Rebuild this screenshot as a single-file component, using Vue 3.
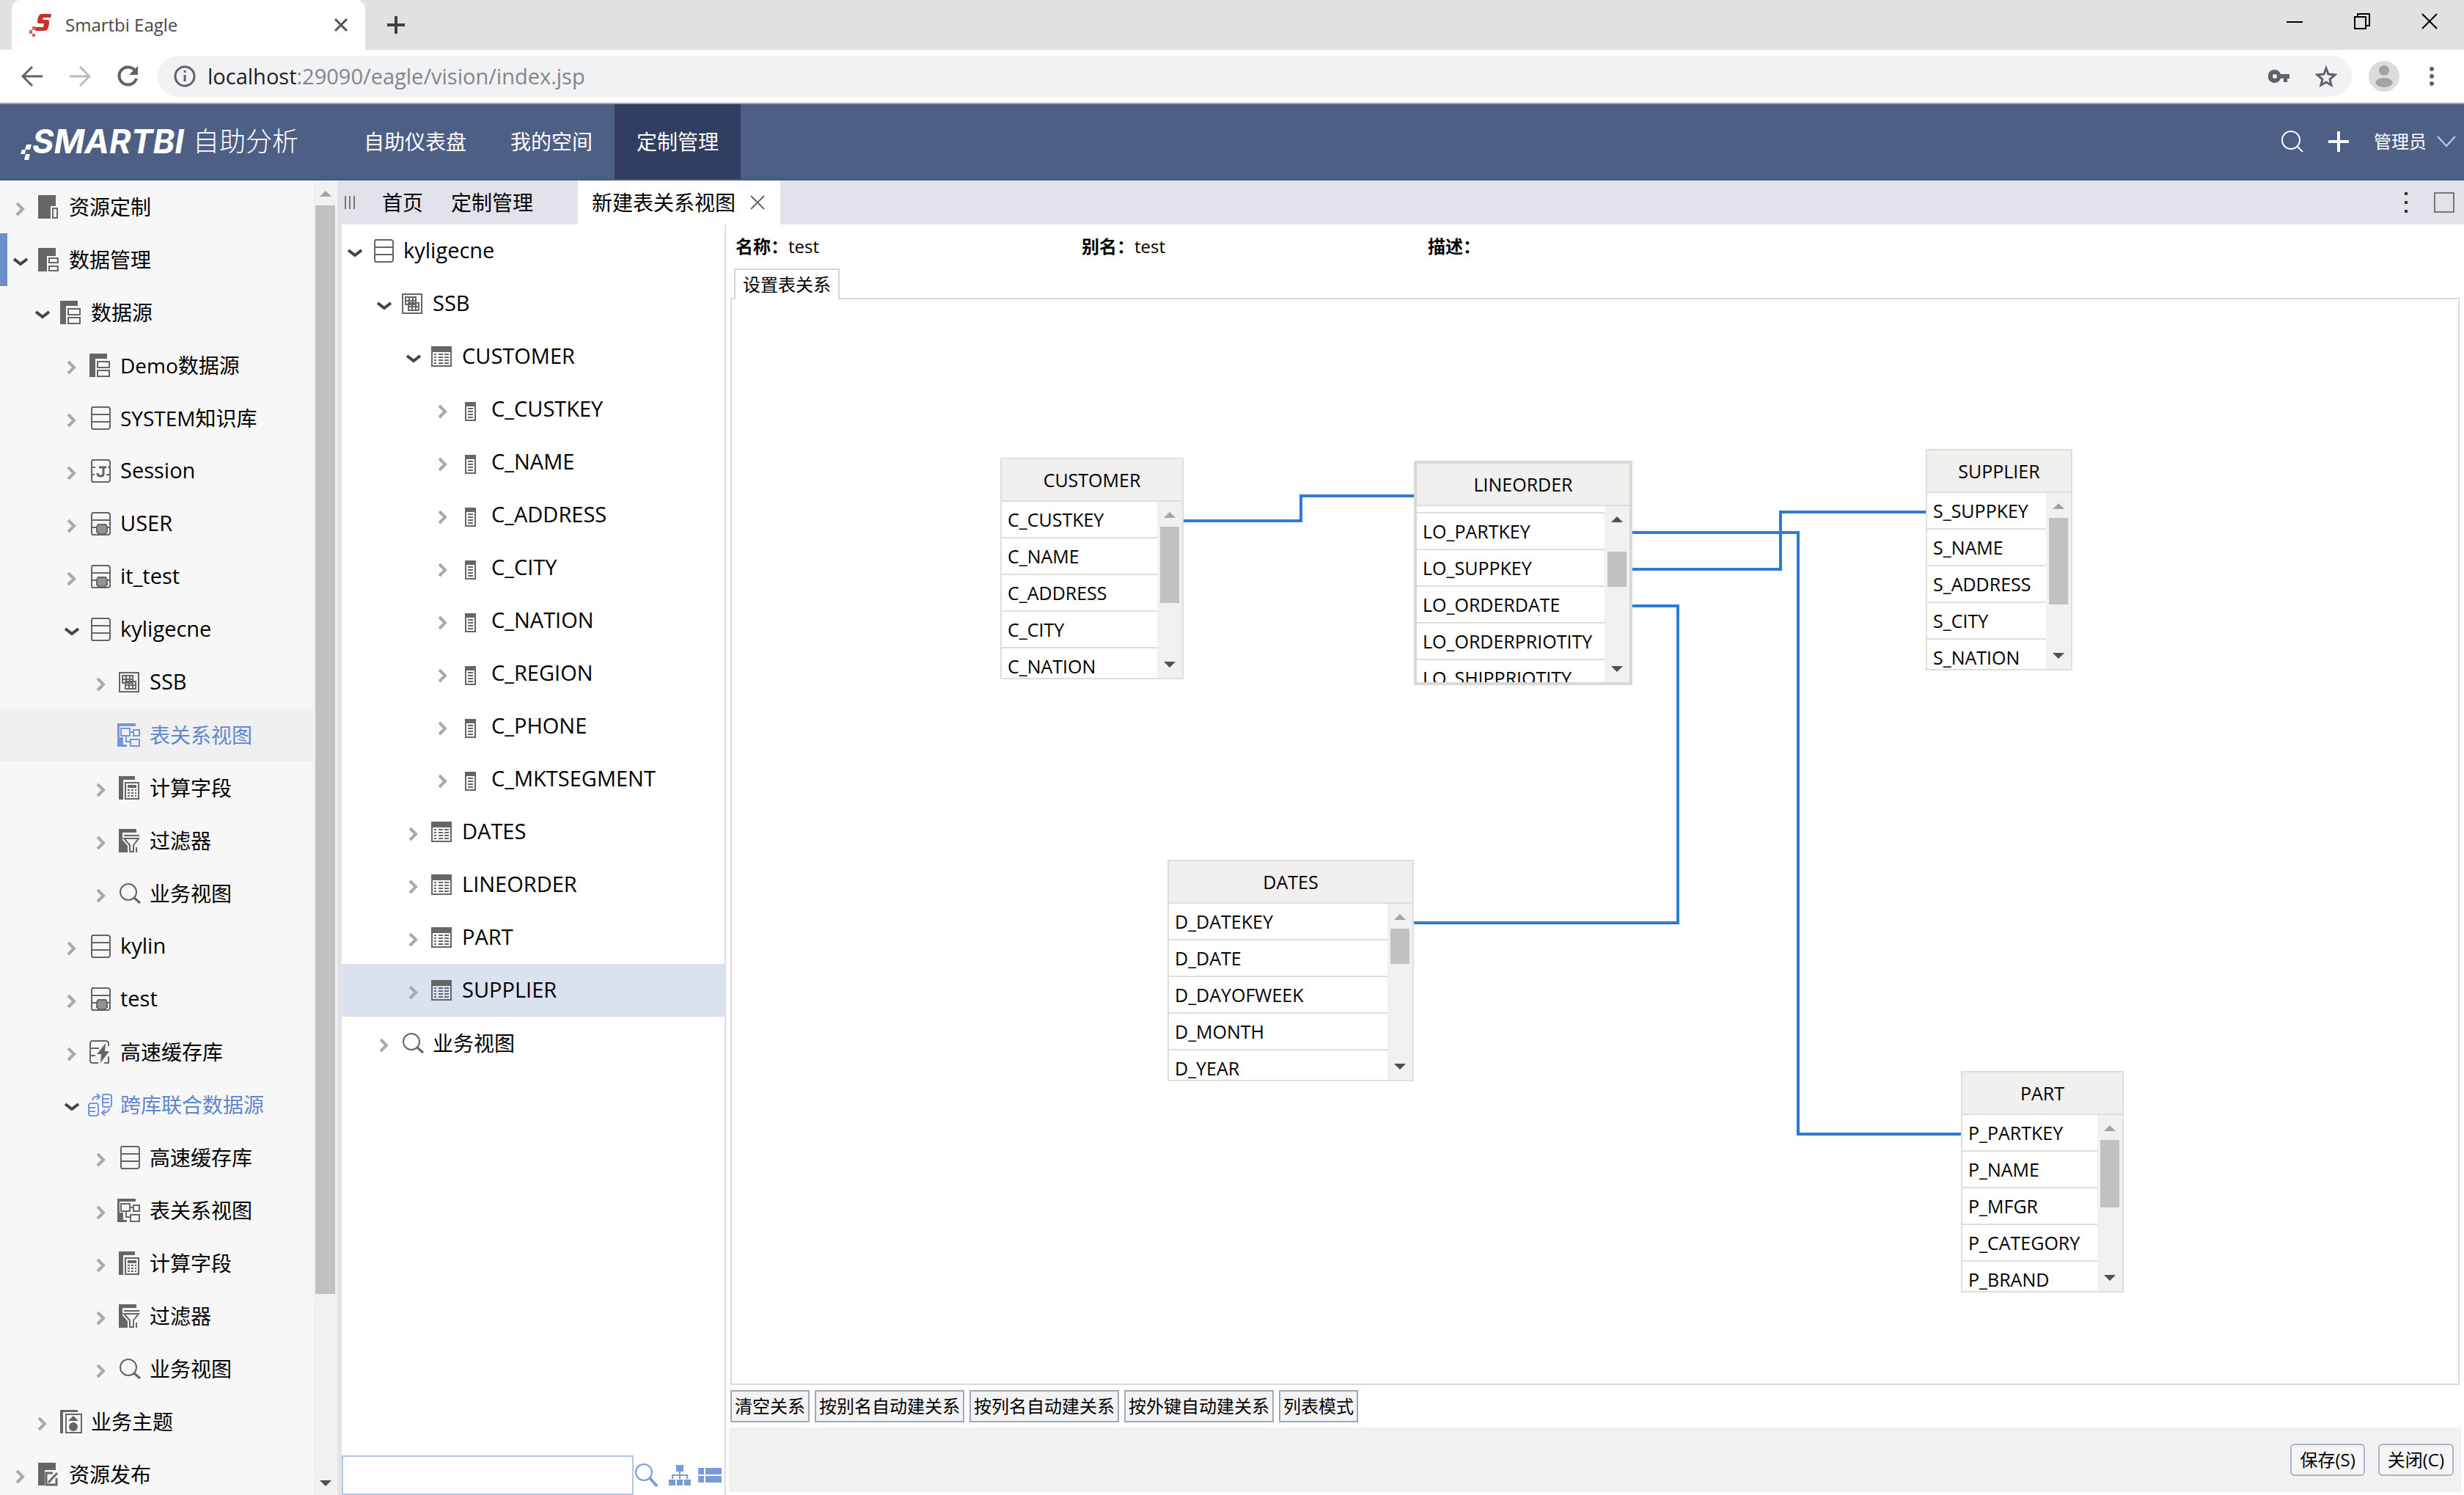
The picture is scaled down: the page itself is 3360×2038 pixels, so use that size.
<script setup>
import { ref } from 'vue'

const navItems = ['自助仪表盘', '我的空间', '定制管理']

const resources = [
  { level: 1, icon: 'folder-doc', label: '资源定制' },
  { level: 1, icon: 'folder-data', label: '数据管理', open: true, marked: true },
  { level: 2, icon: 'folder-source', label: '数据源', open: true },
  { level: 3, icon: 'folder-source', label: 'Demo数据源' },
  { level: 3, icon: 'db', label: 'SYSTEM知识库' },
  { level: 3, icon: 'session', label: 'Session' },
  { level: 3, icon: 'db-user', label: 'USER' },
  { level: 3, icon: 'db-user', label: 'it_test' },
  { level: 3, icon: 'db', label: 'kyligecne', open: true },
  { level: 4, icon: 'schema', label: 'SSB' },
  { level: 4, icon: 'relation', label: '表关系视图', leaf: true, current: true, blue: true },
  { level: 4, icon: 'calc', label: '计算字段' },
  { level: 4, icon: 'filter', label: '过滤器' },
  { level: 4, icon: 'lens', label: '业务视图' },
  { level: 3, icon: 'db', label: 'kylin' },
  { level: 3, icon: 'db-user', label: 'test' },
  { level: 3, icon: 'db-fast', label: '高速缓存库' },
  { level: 3, icon: 'db-cross', label: '跨库联合数据源', open: true, blue: true },
  { level: 4, icon: 'db', label: '高速缓存库' },
  { level: 4, icon: 'relation', label: '表关系视图' },
  { level: 4, icon: 'calc', label: '计算字段' },
  { level: 4, icon: 'filter', label: '过滤器' },
  { level: 4, icon: 'lens', label: '业务视图' },
  { level: 2, icon: 'theme', label: '业务主题' },
  { level: 1, icon: 'publish', label: '资源发布' },
]

const columns = ['C_CUSTKEY', 'C_NAME', 'C_ADDRESS', 'C_CITY', 'C_NATION', 'C_REGION', 'C_PHONE', 'C_MKTSEGMENT']
const catalog = [
  { level: 1, icon: 'db', label: 'kyligecne', open: true },
  { level: 2, icon: 'schema', label: 'SSB', open: true },
  { level: 3, icon: 'table', label: 'CUSTOMER', open: true },
  ...columns.map((label) => ({ level: 4, icon: 'column', label })),
  { level: 3, icon: 'table', label: 'DATES' },
  { level: 3, icon: 'table', label: 'LINEORDER' },
  { level: 3, icon: 'table', label: 'PART' },
  { level: 3, icon: 'table', label: 'SUPPLIER', selected: true },
  { level: 2, icon: 'lens', label: '业务视图' },
]

const tables = [
  { name: 'CUSTOMER', x: 366, y: 216, w: 250, bar: [34, 104], fields: ['C_CUSTKEY', 'C_NAME', 'C_ADDRESS', 'C_CITY', 'C_NATION'] },
  { name: 'LINEORDER', x: 930, y: 220, w: 298, bar: [62, 48], focus: true, fields: ['LO_PARTKEY', 'LO_SUPPKEY', 'LO_ORDERDATE', 'LO_ORDERPRIOTITY', 'LO_SHIPPRIOTITY'] },
  { name: 'SUPPLIER', x: 1628, y: 204, w: 200, bar: [34, 118], fields: ['S_SUPPKEY', 'S_NAME', 'S_ADDRESS', 'S_CITY', 'S_NATION'] },
  { name: 'DATES', x: 594, y: 764, w: 336, bar: [34, 48], fields: ['D_DATEKEY', 'D_DATE', 'D_DAYOFWEEK', 'D_MONTH', 'D_YEAR'] },
  { name: 'PART', x: 1676, y: 1052, w: 222, bar: [34, 92], fields: ['P_PARTKEY', 'P_NAME', 'P_MFGR', 'P_CATEGORY', 'P_BRAND'] },
]

const links = [
  'M616 302H776V268H930',
  'M1228 318H1454V1138H1676',
  'M1228 368H1430V290H1628',
  'M1228 418H1290V850H930',
]

const actions = ['清空关系', '按别名自动建关系', '按列名自动建关系', '按外键自动建关系', '列表模式']
const keyword = ref('')
const isLatin = (text) => /^[\w ]+$/.test(text)
</script>

<template>
  <div class="window">
    <svg class="sprite" aria-hidden="true">
      <symbol id="chev-right" viewBox="0 0 20 32"><path d="M5 11l8 8-8 8" fill="none" stroke="#a9a9a9" stroke-width="4" /></symbol>
      <symbol id="chev-down" viewBox="0 0 20 32"><path d="M1 15l9 7 9-7" fill="none" stroke="#444" stroke-width="4" /></symbol>
      <symbol id="folder-doc" viewBox="0 0 32 32">
        <path d="M0 0h24v15h-7v17H0z" fill="currentColor" /><path d="M20 18h6v13h-6z" fill="none" stroke="currentColor" stroke-width="2" />
      </symbol>
      <symbol id="folder-data" viewBox="0 0 32 32">
        <path d="M0 0h24v11H12v21H0z" fill="currentColor" /><path d="M15 14h12v6H15zM15 25h12v6H15z" fill="none" stroke="currentColor" stroke-width="2" />
      </symbol>
      <symbol id="folder-source" viewBox="0 0 32 32">
        <path d="M0 0h24v7H8v25H0z" fill="currentColor" /><path d="M11 11h16v8H11zM11 23h16v8H11z" fill="none" stroke="currentColor" stroke-width="2" />
      </symbol>
      <symbol id="db" viewBox="0 0 32 32">
        <path d="M4 1h22l2 2v26l-2 2H4l-1-2V3zM3 11h25M3 21h25" fill="none" stroke="currentColor" stroke-width="2" />
      </symbol>
      <symbol id="db-user" viewBox="0 0 32 32">
        <path d="M4 1h22l2 2v26l-2 2H4l-1-2V3zM3 11h25M3 21h7M24 21h4" fill="none" stroke="currentColor" stroke-width="2" />
        <path d="M12 17h10l2 3v7l-3 3h-8l-3-3v-7z" fill="#929292" stroke="currentColor" stroke-width="2" />
      </symbol>
      <symbol id="session" viewBox="0 0 32 32">
        <path d="M4 1h22l2 2v26l-2 2H4l-1-2V3zM3 11h5M3 21h4M25 11h3M23 21h5" fill="none" stroke="currentColor" stroke-width="2" />
        <path d="M13 11h10M19 11v9q0 3-4 3-4 0-4-4" fill="none" stroke="currentColor" stroke-width="3" />
      </symbol>
      <symbol id="db-fast" viewBox="0 0 32 32">
        <path d="M12 31H3l-2-2V3l2-2h20l3 2v5M1 11h12M1 21h7M20 31h6v-9" fill="none" stroke="currentColor" stroke-width="2" />
        <path d="M22 4L10 19h6l-1 12 12-16h-6z" fill="currentColor" />
      </symbol>
      <symbol id="db-cross" viewBox="0 0 32 32" overflow="visible">
        <path d="M19 2h9l2 2v13l-2 2h-9l-1-2V4zM18 8h9M18 13h9M1 14h9l2 2v13l-2 2H1l-2-2V16zM-1 20h9M-1 25h9M4 10q1-6 9-5M10 1l4 4-4 4M27 21q-1 6-9 6M21 23l-4 4 4 4" fill="none" stroke="currentColor" stroke-width="2" />
      </symbol>
      <symbol id="schema" viewBox="0 0 32 32">
        <path d="M1 3h26v26H1z" fill="none" stroke="currentColor" stroke-width="2" />
        <path d="M5 7h14v10H5zM5 12h14M10 7v10M15 7v10M9 15h14v10H9zM9 20h14M14 15v10M19 15v10" fill="none" stroke="currentColor" stroke-width="2" />
      </symbol>
      <symbol id="relation" viewBox="0 0 32 32" overflow="visible">
        <path d="M-2 0h25v4H1v15h5v10h5v3H-2z" fill="currentColor" />
        <path d="M3 7h12v10H3zM20 9h8v8h-8zM16 22h12v9H16zM15 12h5M10 17v8h6" fill="none" stroke="currentColor" stroke-width="2" />
      </symbol>
      <symbol id="calc" viewBox="0 0 32 32">
        <path d="M0 0h22v5H6v27H0z" fill="currentColor" /><path d="M9 9h18v22H9z" fill="none" stroke="currentColor" stroke-width="2" />
        <path d="M12 12h12v4H12z" fill="currentColor" /><path d="M12 19h12M12 23h12M12 27h12" stroke="currentColor" stroke-width="2" stroke-dasharray="3 2" />
      </symbol>
      <symbol id="filter" viewBox="0 0 32 32">
        <path d="M0 0h24v5H5v10l7 8v9H0z" fill="currentColor" />
        <path d="M7 9h21M7 13h20l-7 9v9h-5v-9zM24 25v7" fill="none" stroke="currentColor" stroke-width="2" />
      </symbol>
      <symbol id="lens" viewBox="0 0 32 32">
        <circle cx="13" cy="14" r="11" fill="none" stroke="currentColor" stroke-width="2" /><path d="M21 22l8 7" stroke="currentColor" stroke-width="3" />
      </symbol>
      <symbol id="theme" viewBox="0 0 32 32">
        <path d="M0 0h24v3H4v29H0z" fill="currentColor" /><path d="M8 6h21v25H8z" fill="none" stroke="currentColor" stroke-width="2" />
        <path d="M18 8l7 7H11z" fill="currentColor" /><circle cx="18" cy="23" r="6" fill="currentColor" />
      </symbol>
      <symbol id="publish" viewBox="0 0 32 32">
        <path d="M0 0h24v10H9v21H0z" fill="currentColor" /><path d="M20 14H11v16h14v-9M14 27L26 14" fill="none" stroke="currentColor" stroke-width="3" />
      </symbol>
      <symbol id="table" viewBox="0 0 32 32">
        <path d="M0 2h28v8H0z" fill="currentColor" /><path d="M1 9h26v20H1z" fill="none" stroke="currentColor" stroke-width="2" />
        <path d="M4 13h3M10 13h6M18 13h6M4 17h3M10 17h6M18 17h6M4 21h3M10 21h6M18 21h6M4 25h3M10 25h6M18 25h6" stroke="currentColor" stroke-width="2" />
      </symbol>
      <symbol id="column" viewBox="0 0 32 32">
        <path d="M6 6h15v6H6z" fill="currentColor" /><path d="M7 11h13v20H7z" fill="none" stroke="currentColor" stroke-width="2" />
        <path d="M10 15h7M10 19h7M10 23h7M10 27h7" stroke="currentColor" stroke-width="2" />
      </symbol>
      <symbol id="tri-up" viewBox="0 0 16 8"><path d="M8 0l8 8H0z" fill="currentColor" /></symbol>
      <symbol id="tri-down" viewBox="0 0 16 8"><path d="M0 0h16L8 8z" fill="currentColor" /></symbol>
    </svg>

    <div class="tab-strip">
      <div class="browser-tab">
        <svg class="favicon" viewBox="0 0 32 32">
          <path d="M30 1H18q-5 0-6 5l-1 4q-1 4 3 4h6l-1 5H9l-1 5h12q5 0 6-5l1-5q1-5-3-5h-6l1-3h10z" fill="#c9302c" />
          <path d="M4 18h5v5H4zM0 23h4v5H0zM4 28h4v4H4z" fill="#d9645f" />
        </svg>
        <span class="browser-title">Smartbi Eagle</span>
        <button class="plain" aria-label="关闭标签"><svg width="18" height="18" viewBox="0 0 18 18"><path d="M1 1l16 16M17 1L1 17" stroke="#50545a" stroke-width="3" /></svg></button>
      </div>
      <button class="plain new-tab" aria-label="新标签"><svg width="24" height="24" viewBox="0 0 24 24"><path d="M12 0v24M0 12h24" stroke="#3c4043" stroke-width="4" /></svg></button>
      <div class="window-controls">
        <button class="plain" aria-label="最小化"><svg width="22" height="22" viewBox="0 0 22 22"><path d="M0 12h22" stroke="#000" stroke-width="2" /></svg></button>
        <button class="plain" aria-label="还原"><svg width="22" height="22" viewBox="0 0 22 22"><path d="M1 5h15v16H1zM5 5V1h16v16h-4" fill="none" stroke="#000" stroke-width="2" /></svg></button>
        <button class="plain" aria-label="关闭"><svg width="22" height="22" viewBox="0 0 22 22"><path d="M1 1l20 20M21 1L1 21" stroke="#000" stroke-width="2" /></svg></button>
      </div>
    </div>

    <div class="toolbar">
      <button class="plain" aria-label="后退"><svg width="30" height="30" viewBox="0 0 30 30"><path d="M29 15H3M15 2L2 15l13 13" fill="none" stroke="#5f6368" stroke-width="3" /></svg></button>
      <button class="plain" aria-label="前进"><svg width="30" height="30" viewBox="0 0 30 30"><path d="M1 15h26M15 2l13 13-13 13" fill="none" stroke="#babcbe" stroke-width="3" /></svg></button>
      <button class="plain" aria-label="刷新"><svg width="30" height="30" viewBox="0 0 30 30"><path d="M25 7A12 12 0 1 0 27 18" fill="none" stroke="#5f6368" stroke-width="4" /><path d="M29 1v12H17z" fill="#5f6368" /></svg></button>
      <div class="omnibox">
        <svg width="30" height="30" viewBox="0 0 30 30"><circle cx="15" cy="15" r="13" fill="none" stroke="#5f6368" stroke-width="3" /><path d="M15 13v9M15 7v3" stroke="#5f6368" stroke-width="3" /></svg>
        <div class="url"><span class="host">localhost</span>:29090/eagle/vision/index.jsp</div>
        <svg width="30" height="20" viewBox="0 0 30 20"><path d="M9 1a9 9 0 1 0 8 12h4v5h5v-5h3V7H17A9 9 0 0 0 9 1zm0 6a3 3 0 1 1 0 6 3 3 0 0 1 0-6z" fill="#5f6368" fill-rule="evenodd" /></svg>
        <svg width="30" height="30" viewBox="0 0 30 30"><path d="M15 4l3 8 9 1-7 6 2 8-7-4-7 4 2-8-7-6 9-1z" fill="none" stroke="#5f6368" stroke-width="3" /></svg>
      </div>
      <svg width="42" height="42" viewBox="0 0 42 42"><circle cx="21" cy="21" r="21" fill="#dcdcdc" /><circle cx="21" cy="13" r="7" fill="#a3a3a3" /><path d="M9 30q2-7 12-7t12 7q-4 6-12 6T9 30z" fill="#a3a3a3" /></svg>
      <button class="plain" aria-label="菜单"><svg width="8" height="30" viewBox="0 0 8 30"><g fill="#5f6368"><circle cx="4" cy="5" r="3" /><circle cx="4" cy="15" r="3" /><circle cx="4" cy="25" r="3" /></g></svg></button>
    </div>

    <header class="app-header">
      <div class="logo">
        <svg width="20" height="32" viewBox="0 0 20 32"><path d="M8 10h7l-2 7H6zM2 17h5l-1 6H0zM7 23h6l-2 8H5z" fill="#fff" /></svg>
        <span class="brand">SMARTBI</span>
        <span class="product">自助分析</span>
      </div>
      <nav>
        <a v-for="item in navItems" :key="item" href="#" :class="{ active: item === '定制管理' }">{{ item }}</a>
      </nav>
      <div class="header-tools">
        <button class="plain" aria-label="搜索"><svg width="30" height="30" viewBox="0 0 30 30"><circle cx="13" cy="13" r="12" fill="none" stroke="#fff" stroke-width="2" /><path d="M22 22l7 7" stroke="#fff" stroke-width="2" /></svg></button>
        <button class="plain" aria-label="新建"><svg width="28" height="28" viewBox="0 0 28 28"><path d="M14 0v28M0 14h28" stroke="#fff" stroke-width="4" /></svg></button>
        <button class="plain user">管理员<svg width="26" height="16" viewBox="0 0 26 16"><path d="M1 1l12 13L25 1" fill="none" stroke="#c5cbdb" stroke-width="2" /></svg></button>
      </div>
    </header>

    <div class="body">
      <aside class="sidebar">
        <ul class="tree">
          <li v-for="(row, i) in resources" :key="i" :class="['row', 'level-' + row.level, { marked: row.marked, current: row.current, blue: row.blue }]">
            <button class="plain toggle" :aria-label="row.label"><svg v-if="!row.leaf" width="20" height="32"><use :href="row.open ? '#chev-down' : '#chev-right'" /></svg></button>
            <svg class="icon" width="32" height="32"><use :href="'#' + row.icon" /></svg>
            <span :class="['label', { latin: isLatin(row.label) }]">{{ row.label }}</span>
          </li>
        </ul>
        <div class="scrollbar">
          <svg class="dim" width="16" height="8"><use href="#tri-up" /></svg>
          <div class="track"><div class="thumb" :style="{ height: '86%' }"></div></div>
          <svg width="16" height="8"><use href="#tri-down" /></svg>
        </div>
      </aside>

      <main class="workspace">
        <div class="page-tabs">
          <svg class="grip" width="16" height="18" viewBox="0 0 16 18"><path d="M2 0v18M8 0v18M14 0v18" stroke="#777" stroke-width="2" /></svg>
          <a href="#" class="page-tab">首页</a>
          <a href="#" class="page-tab">定制管理</a>
          <div class="page-tab active">新建表关系视图
            <button class="plain" aria-label="关闭页面"><svg width="20" height="20" viewBox="0 0 20 20"><path d="M1 1l18 18M19 1L1 19" stroke="#666" stroke-width="2" /></svg></button>
          </div>
          <div class="page-tools">
            <button class="plain" aria-label="更多"><svg width="4" height="28" viewBox="0 0 4 28"><path d="M0 0h4v4H0zM0 12h4v4H0zM0 24h4v4H0z" fill="#333" /></svg></button>
            <button class="plain" aria-label="最大化"><svg width="28" height="28" viewBox="0 0 28 28"><path d="M1 1h26v26H1z" fill="none" stroke="#777" stroke-width="2" /></svg></button>
          </div>
        </div>

        <div class="panes">
          <section class="catalog">
            <ul class="tree">
              <li v-for="row in catalog" :key="row.label" :class="['row', 'level-' + row.level, { selected: row.selected }]">
                <button class="plain toggle" :aria-label="row.label"><svg width="20" height="32"><use :href="row.open ? '#chev-down' : '#chev-right'" /></svg></button>
                <svg class="icon" width="32" height="32"><use :href="'#' + row.icon" /></svg>
                <span :class="['label', { latin: isLatin(row.label) }]">{{ row.label }}</span>
              </li>
            </ul>
            <div class="search">
              <input v-model="keyword" type="text" aria-label="查找" />
              <button class="plain" aria-label="搜索"><svg width="32" height="32" viewBox="0 0 32 32"><circle cx="12" cy="12" r="11" fill="none" stroke="#7b9bd6" stroke-width="2" /><path d="M20 20l10 11" stroke="#7b9bd6" stroke-width="4" /></svg></button>
              <button class="plain" aria-label="树形"><svg width="30" height="28" viewBox="0 0 30 28"><path d="M10 0h10v9H10zM0 20h9v8H0zM11 20h8v8h-8zM21 20h9v8h-9z" fill="#7b9bd6" /><path d="M15 9v10M5 19v-5h20v5" fill="none" stroke="#7b9bd6" stroke-width="2" /></svg></button>
              <button class="plain" aria-label="列表"><svg width="32" height="20" viewBox="0 0 32 20"><path d="M0 0h8v9H0zM10 0h22v9H10zM0 11h8v9H0zM10 11h22v9H10z" fill="#7b9bd6" /></svg></button>
            </div>
          </section>

          <section class="editor">
            <dl class="info">
              <div><dt>名称：</dt><dd>test</dd></div>
              <div><dt>别名：</dt><dd>test</dd></div>
              <div><dt>描述：</dt><dd></dd></div>
            </dl>
            <button class="plain editor-tab">设置表关系</button>
            <div class="canvas">
              <svg class="links"><path v-for="d in links" :key="d" :d="d" fill="none" stroke="#2f7dd3" stroke-width="4" /></svg>
              <article v-for="t in tables" :key="t.name" :class="['node', { focus: t.focus }]" :style="{ left: t.x + 'px', top: t.y + 'px', width: t.w + 'px' }">
                <h3>{{ t.name }}</h3>
                <div class="node-body">
                  <ul>
                    <li v-if="t.focus" class="scrolled"></li>
                    <li v-for="f in t.fields" :key="f">{{ f }}</li>
                  </ul>
                  <div class="node-scroll">
                    <svg :class="{ dim: !t.focus }" width="16" height="8"><use href="#tri-up" /></svg>
                    <div class="node-thumb" :style="{ top: t.bar[0] + 'px', height: t.bar[1] + 'px' }"></div>
                    <svg width="16" height="8"><use href="#tri-down" /></svg>
                  </div>
                </div>
              </article>
            </div>
            <div class="actions">
              <button v-for="a in actions" :key="a">{{ a }}</button>
            </div>
            <footer class="footer">
              <button>保存(S)</button>
              <button>关闭(C)</button>
            </footer>
          </section>
        </div>
      </main>
    </div>
  </div>
</template>

<style>
body {
  overflow: hidden;
}
</style>

<style scoped>
* {
  box-sizing: border-box;
}
.window {
  display: flex;
  flex-direction: column;
  height: 100vh;
  overflow: hidden;
  background: #fff;
  color: #000;
  font-family: "Open Sans", "Noto Sans CJK SC", sans-serif;
  font-size: 28px;
  line-height: 36px;
}
.sprite {
  position: absolute;
  width: 0;
  height: 0;
}
svg {
  display: block;
  flex: none;
}
ul, dl, dd, h3 {
  margin: 0;
  padding: 0;
  list-style: none;
}
a {
  color: inherit;
  text-decoration: none;
}
button {
  font: inherit;
  color: inherit;
  white-space: nowrap;
}
.plain {
  display: flex;
  align-items: center;
  padding: 0;
  border: 0;
  background: none;
}

/* browser frame */
.tab-strip {
  display: flex;
  align-items: center;
  flex: none;
  height: 68px;
  padding: 0 36px 0 16px;
  background: #e1e1e4;
}
.browser-tab {
  display: flex;
  align-items: center;
  width: 482px;
  height: 68px;
  padding: 0 24px;
  border-radius: 12px 12px 0 0;
  background: #fff;
}
.favicon {
  width: 32px;
  height: 32px;
}
.browser-title {
  flex: 1;
  margin-left: 17px;
  color: #45494d;
  font-size: 24px;
}
.new-tab {
  margin-left: 30px;
}
.window-controls {
  display: flex;
  gap: 70px;
  margin-left: auto;
  padding-bottom: 10px;
}
.toolbar {
  display: flex;
  align-items: center;
  flex: none;
  height: 74px;
  padding: 0 40px 0 29px;
  border-bottom: 2px solid #a3a6a8;
}
.toolbar > .plain + .plain {
  margin-left: 35px;
}
.omnibox {
  display: flex;
  align-items: center;
  flex: 1;
  height: 56px;
  margin: 0 23px 0 26px;
  padding: 0 20px 0 22px;
  border-radius: 28px;
  background: #f1f2f3;
}
.omnibox svg + svg {
  margin-left: 34px;
}
.url {
  flex: 1;
  margin-left: 16px;
  color: #80868b;
  font-size: 29px;
}
.host {
  color: #202124;
}
.toolbar svg + .plain {
  margin-left: 40px;
}

/* application header */
.app-header {
  display: flex;
  flex: none;
  height: 104px;
  border-bottom: 2px solid #44557e;
  background: #4e5f86;
  color: #fff;
}
.logo {
  display: flex;
  align-items: center;
  width: 466px;
  padding-left: 28px;
}
.logo svg {
  margin: 20px -4px 0 0;
}
.brand {
  font-family: Inter, sans-serif;
  font-size: 45px;
  font-style: italic;
  font-weight: 700;
}
.product {
  margin-left: 12px;
  font-size: 36px;
  font-weight: 300;
}
nav {
  display: flex;
}
nav a {
  display: flex;
  align-items: center;
  padding: 0 30px;
}
nav a.active {
  background: #313e62;
}
.header-tools {
  display: flex;
  align-items: center;
  gap: 34px;
  margin-left: auto;
  padding-right: 11px;
}
.user {
  gap: 14px;
  font-size: 24px;
}

/* trees */
.body {
  display: flex;
  flex: 1;
  min-height: 0;
}
.sidebar {
  display: flex;
  flex: none;
  width: 466px;
  border-right: 6px solid #e2e2eb;
  background: #f7f7f7;
}
.tree {
  flex: 1;
  min-height: 0;
  overflow: hidden;
}
.row {
  display: flex;
  align-items: center;
  height: 72px;
  white-space: nowrap;
}
.level-1 {
  padding-left: 18px;
}
.level-2 {
  padding-left: 48px;
}
.level-3 {
  padding-left: 88px;
}
.level-4 {
  padding-left: 128px;
}
.catalog .level-1 {
  padding-left: 8px;
}
.marked {
  padding-left: 8px;
  border-left: 10px solid #6b8ec9;
}
.current {
  background: #f0f0f0;
}
.selected {
  background: #dae1ef;
}
.toggle {
  width: 20px;
  margin-right: 14px;
}
.icon {
  margin-right: 10px;
  color: #666;
  overflow: visible;
}
.blue .icon {
  color: #7595dc;
}
.blue .label {
  color: #5f86cf;
}
.latin {
  padding-bottom: 2px;
  font-size: 29px;
}
.scrollbar {
  display: flex;
  flex-direction: column;
  align-items: center;
  gap: 12px;
  width: 33px;
  padding: 14px 0 12px;
  background: #f1f1f1;
  color: #505050;
}
.track {
  flex: 1;
  width: 27px;
}
.thumb {
  background: #c1c1c1;
}
.dim {
  color: #a3a3a3;
}

/* page tabs */
.workspace {
  display: flex;
  flex: 1;
  flex-direction: column;
  min-width: 0;
}
.page-tabs {
  display: flex;
  align-items: center;
  flex: none;
  height: 60px;
  background: #e2e2eb;
}
.grip {
  margin: 0 36px 0 3px;
}
.page-tab {
  margin-right: 38px;
}
.page-tab.active {
  display: flex;
  align-items: center;
  gap: 20px;
  height: 60px;
  margin-left: 23px;
  padding: 0 21px 0 19px;
  background: #fff;
}
.page-tools {
  display: flex;
  gap: 36px;
  margin-left: auto;
  padding-right: 13px;
}
.panes {
  display: flex;
  flex: 1;
  min-height: 0;
}
.catalog {
  display: flex;
  flex: none;
  flex-direction: column;
  width: 524px;
  border-right: 2px solid #dedede;
}
.search {
  display: flex;
  align-items: center;
  height: 54px;
  padding-right: 4px;
}
.search input {
  flex: 1;
  min-width: 0;
  height: 54px;
  border: 2px solid #b4c6e8;
  font: inherit;
}
.search button {
  margin-right: 10px;
}
.search button:first-of-type {
  margin: 0 14px 0 2px;
}
.search button:last-of-type {
  margin-right: 0;
}

/* relation editor */
.editor {
  display: flex;
  flex: 1;
  flex-direction: column;
  min-width: 0;
  padding: 0 6px 4px;
  font-size: 24px;
}
.info {
  display: grid;
  grid-template-columns: 472px 472px 1fr;
  height: 60px;
  padding-left: 7px;
}
.info div {
  display: flex;
  align-items: center;
}
.info dt {
  font-weight: 700;
}
.editor-tab {
  position: relative;
  z-index: 1;
  align-self: flex-start;
  height: 42px;
  margin: 0 0 -2px 5px;
  padding: 0 10px;
  border: 2px solid #d6d6d6;
  border-bottom: 0;
  background: #fff;
}
.canvas {
  position: relative;
  flex: 1;
  overflow: hidden;
  border: 2px solid #d9d9d9;
}
.links {
  position: absolute;
  width: 100%;
  height: 100%;
}
.node {
  position: absolute;
  overflow: hidden;
  border: 2px solid #dfdfda;
  background: #fff;
  font-size: 25px;
}
.node.focus {
  border-width: 4px;
  border-color: #dadad4;
}
.node h3 {
  height: 58px;
  border-bottom: 2px solid #dfdfda;
  background: #f1f0ef;
  font-size: 25px;
  font-weight: 400;
  line-height: 56px;
  text-align: center;
}
.node-body {
  display: flex;
  height: 240px;
}
.node ul {
  flex: 1;
  min-width: 0;
}
.node li {
  height: 50px;
  padding-left: 8px;
  border-bottom: 2px solid #dfdfda;
  line-height: 48px;
  white-space: nowrap;
}
.node li.scrolled {
  height: 10px;
}
.node-scroll {
  position: relative;
  display: flex;
  flex-direction: column;
  align-items: center;
  justify-content: space-between;
  width: 34px;
  padding: 14px 0;
  background: #f1f1f1;
  color: #505050;
}
.node-thumb {
  position: absolute;
  left: 4px;
  right: 4px;
  background: #c1c1c1;
}
.actions {
  display: flex;
  align-items: center;
  gap: 7px;
  height: 58px;
}
.actions button {
  height: 44px;
  padding: 0 4px;
  border: 2px solid #9ca9b9;
  background: #f3f3f3;
}
.footer {
  display: flex;
  align-items: center;
  justify-content: flex-end;
  gap: 18px;
  height: 88px;
  margin: 0 -2px;
  padding-right: 10px;
  background: #f1f1f1;
}
.footer button {
  height: 44px;
  padding: 0 11px;
  border: 2px solid #a9b4cb;
  border-radius: 6px;
  background: #f5f5f5;
}
</style>
